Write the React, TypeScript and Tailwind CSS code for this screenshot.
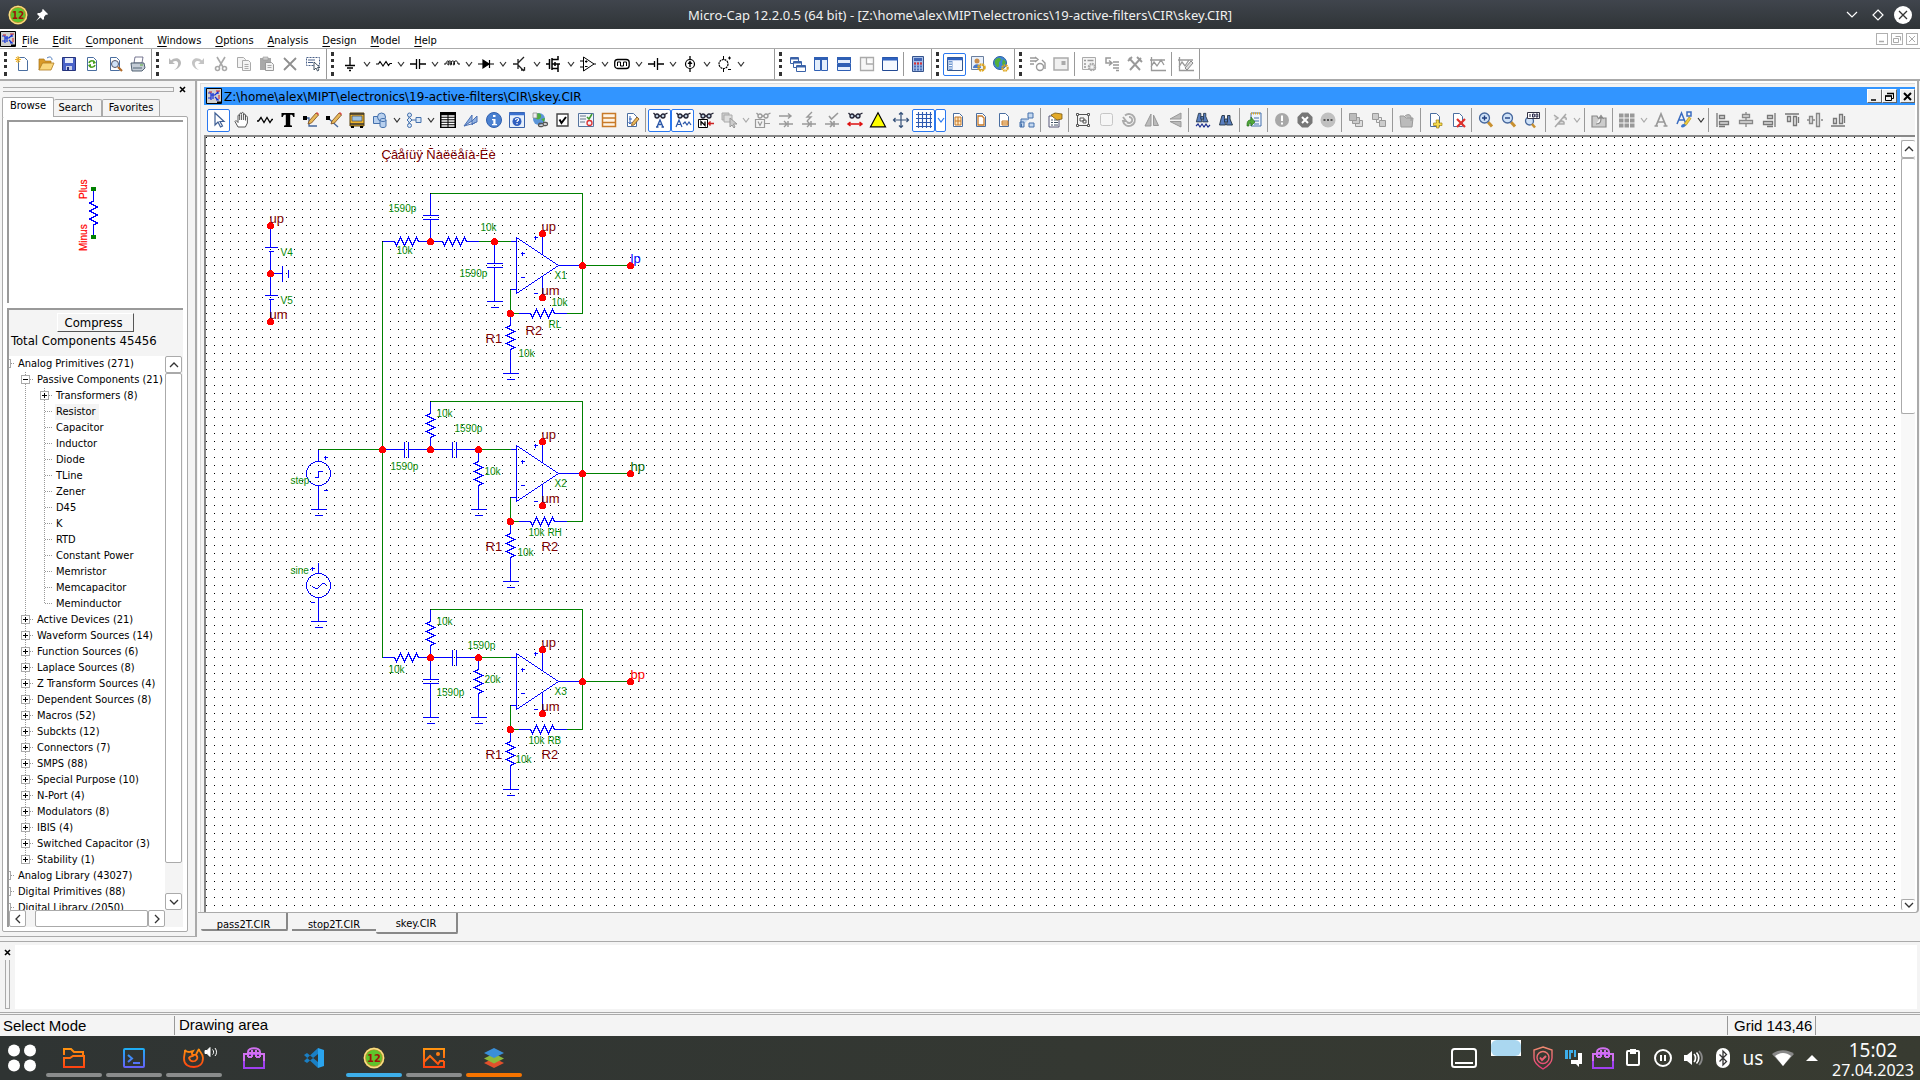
import React from "react";

const ui = "font-['DejaVu_Sans_Condensed','Noto_Sans',sans-serif]";

/* ---------- toolbar icons, all on a 16 x 16 grid ---------- */

const page = <path d="M3.5 1.5h6l3 3v10h-9z" fill="#fff" stroke="#4a6ea0" />;
const glasses = (
  <g fill="none" stroke="#223" strokeWidth="1.3">
    <circle cx="5" cy="4" r="2" fill="#bcd" />
    <circle cx="11" cy="4" r="2" fill="#bcd" />
    <path d="M1.500 1l2 2M12.500 2.500l3-1.500M7 4h2" />
  </g>
);
const glassesGrey = (
  <g fill="none" stroke="#999" strokeWidth="1.3">
    <circle cx="5" cy="4" r="2" />
    <circle cx="11" cy="4" r="2" />
    <path d="M1.500 1l2 2M12.500 2.500l3-1.500M7 4h2" />
  </g>
);
const pencil = (
  <>
    <path d="M6 9l7-8 2.500 2-7 8-3.500 1z" fill="#e8b95a" stroke="#7a4a1a" strokeWidth=".8" />
    <path d="M13 1l2.500 2 .5-1-2-2z" fill="#d44" />
  </>
);
const binoc = (
  <g fill="#5a7fc0" stroke="#234" strokeWidth=".9">
    <path d="M4 1.500h2.500v3L7.500 11H1.500L3 5zM9.500 1.500H12v3.500l2.500 6h-6L9.500 5z" />
    <path d="M6.500 5h3v3h-3z" />
  </g>
);
const lens = (
  <>
    <path d="M10 10l4 4.500" stroke="#c89030" strokeWidth="3" />
    <circle cx="6.500" cy="6" r="5" fill="#cfe2f8" stroke="#46679c" strokeWidth="1.3" />
  </>
);

const icons: Record<string, React.ReactNode> = {
  New: <>{page}<path d="M3 0v7M0 3.500h6M1 1l4 5M5 1L1 6" stroke="#f0b020" /></>,
  Open: <><path d="M1 14V3h5l1 2h6v3H5z" fill="#d99a28" stroke="#a87418" strokeWidth=".7" /><path d="M1 14l3.500-7H16l-3 7z" fill="#f9d77d" stroke="#b07a1c" strokeWidth=".8" /><path d="M9 2c3-2 5-1 5 2" fill="none" stroke="#5580c0" /></>,
  Save: <><path d="M1.500 1.500h13v13h-13z" fill="#4a63c8" stroke="#25337c" /><path d="M4 2h8v5H4z" fill="#e7ecfa" /><path d="M5 10h6v4H5z" fill="#c9cfe8" /><path d="M6 11h2v3H6z" fill="#25337c" /></>,
  Revert: <>{page}<path d="M5 7c1-3 5-3 6 0M11 9c-1 3-5 3-6 0" fill="none" stroke="#48a020" strokeWidth="1.6" /><path d="M9 4l3 3-3 1zM7 12L4 9l3-1z" fill="#48a020" /></>,
  Preview: <>{page}<circle cx="8" cy="8" r="3.500" fill="#cfe2f8" stroke="#556" /><path d="M11 11l4 4" stroke="#b06a28" strokeWidth="2.200" /></>,
  Print: <><path d="M5 1h8l-1 6H4z" fill="#fff" stroke="#557" strokeWidth=".8" /><path d="M1 7h13l1 5-3 3H2z" fill="#c4ccd6" stroke="#456" strokeWidth=".9" /><path d="M3 12h9" stroke="#567" /><path d="M10 9h3" stroke="#58b038" /></>,
  Undo: <path d="M2 2v6h6L5.500 6C9 3.500 12 5.500 11 9c-.5 2-2 4-4 5 4-1 7-4 7-7 0-5-6-6.500-10-2.500z" fill="#b9b9b9" />,
  Redo: <path d="M14 2v6H8l2.500-2C7 3.500 4 5.500 5 9c.5 2 2 4 4 5-4-1-7-4-7-7 0-5 6-6.500 10-2.500z" fill="#c4c4c4" />,
  Cut: <g fill="none" stroke="#a9a9a9" strokeWidth="1.6"><path d="M4 1l6 10M12 1L6 11" /><circle cx="4.500" cy="12.500" r="2" /><circle cx="11.500" cy="12.500" r="2" /></g>,
  Copy: <g fill="#f4f4f4" stroke="#aaa"><path d="M1.500 1.500h6l2 2v8h-8z" /><path d="M6.500 4.500h6l2 2v8h-8z" /><path d="M8.500 8.500h4M8.500 10.500h4M8.500 12.500h4" /></g>,
  Paste: <><path d="M1 2h11v12H1z" fill="#a9a9a9" /><path d="M4 1h5v3H4z" fill="#ccc" stroke="#999" strokeWidth=".6" /><path d="M6.500 6.500h6l2 2v6h-8z" fill="#f2f2f2" stroke="#999" /><path d="M8.500 9.500h4M8.500 11.500h4" stroke="#aaa" /></>,
  Delete: <path d="M2 2l12 12M14 2L2 14" stroke="#8f8f8f" strokeWidth="1.800" />,
  "Select all": <><path d="M1.500 1.500h13v8h-13z" fill="none" stroke="#4a6088" strokeDasharray="2 1" /><path d="M3 4h7M3 6.500h5" stroke="#4a6088" /><path d="M9 6v8l2-2 1.500 3 1.500-1-1.500-2.500H15z" fill="#fff" stroke="#345" strokeWidth=".9" /></>,
  Ground: <path d="M8 1v8M3 9.500h10M5 12h6M7 14.500h2" stroke="#000" strokeWidth="1.300" />,
  Resistor: <path d="M0 8h2.500L4 5.500l3 4.500 3-4.500 2.500 4L14 7.500h2" fill="none" stroke="#000" strokeWidth="1.200" />,
  Capacitor: <path d="M0 8h6.500M9.500 8H16M6.500 3v10M9.500 3v10" stroke="#000" strokeWidth="1.300" fill="none" />,
  Inductor: <path d="M0 8h2c0-4 4-4 3 0-.5 2-1.500 1-1-.5C4 4 8 4 7.500 8c-.5 2-1.500 1-1-.5C7 4 11 4 10.500 8c-.5 2-1.500 1-1-.5C10 4 14 4 14 8h2" fill="none" stroke="#000" />,
  Diode: <path d="M0 8h16M5 4v8l6-4zM11.500 4v8" stroke="#000" strokeWidth="1.200" />,
  Transistor: <path d="M1 8h5M6 3v10M6 7l6-6M6 9l6 6M9 14h3.500v-3" stroke="#222" strokeWidth="1.300" fill="none" />,
  Mosfet: <path d="M0 8h3M3.500 3v10M6 2v12M6 3.500h6V0M6 8h8M12 8v8M6 12.500h6M9 6v4" stroke="#000" strokeWidth="1.500" fill="none" />,
  Opamp: <path d="M3.500 1v14L14 8zM0 5h3M0 11h3M14 8h2M5 5.500h2.500M6.200 4.300v2.500M5 10.500h2.500" stroke="#000" fill="none" />,
  "Digital source": <><rect x=".7" y="3.500" width="14.500" height="9" rx="3" fill="none" stroke="#000" strokeWidth="1.300" /><path d="M3.500 10V6h3v4h3V6h3v4" fill="none" stroke="#000" /></>,
  Battery: <path d="M0 8h6.500M9.500 8H16M6.500 5v6M9.500 2v12" stroke="#000" strokeWidth="1.300" />,
  "Current source": <><circle cx="8" cy="8" r="4.500" fill="none" stroke="#000" strokeWidth="1.200" /><path d="M8 0v3.500M8 12.500V16M8 11V6" stroke="#000" strokeWidth="1.300" /><path d="M5.500 8L8 4.500 10.500 8z" /></>,
  "Voltage source": <><circle cx="7.500" cy="8" r="4.500" fill="none" stroke="#000" strokeWidth="1.200" strokeDasharray="2 .7" /><path d="M7.500 0v3.500M7.500 12.500V16M12 2h3M13.500 .5v3M12 13.500h3" stroke="#000" /></>,
  Cascade: <g fill="#fff" stroke="#3a62a8"><path d="M.5 1.500h8v6h-8z" /><path d="M1 2.500h7" strokeWidth="2" /><path d="M3.500 5.500h8v6h-8z" /><path d="M4 6.500h7" strokeWidth="2" /><path d="M6.500 9.500h9v6h-9z" /><path d="M7 10.500h8" strokeWidth="2" /></g>,
  "Tile vertical": <g fill="#e3eefc" stroke="#2f5fb4"><path d="M1.500 1.500h6v13h-6zM8.500 1.500h6v13h-6z" /><path d="M1 2.500h14" strokeWidth="3" /></g>,
  "Tile horizontal": <g fill="#e3eefc" stroke="#2f5fb4"><path d="M1.500 1.500h13v6h-13zM1.500 8.500h13v6h-13z" /><path d="M1 2.500h14M1 9.500h14" strokeWidth="3" /></g>,
  Overlap: <path d="M1.500 1.500h13v13h-13zM7.500 2v6h7" fill="#f6f6f6" stroke="#aaa" strokeWidth="1.300" />,
  Maximize: <><path d="M.5 1.500h15v13H.5z" fill="#f4f8ff" stroke="#234a94" /><path d="M0 3h16" stroke="#2f62c0" strokeWidth="3" /></>,
  Calculator: <><path d="M2.500.5h11v15h-11z" fill="#a9c0e8" stroke="#35538c" /><path d="M4 2h8v3H4z" fill="#3f64b4" /><path d="M4 7.500h8M4 10.500h8M4 13.500h8" stroke="#4a6fb8" strokeWidth="1.800" strokeDasharray="2 1" /><path d="M4 7.500h8" stroke="#d33" strokeWidth="1.800" strokeDasharray="2 1" /></>,
  Panel: <><path d="M.5 1.500h15v13H.5z" fill="#f4f8ff" stroke="#34568c" /><path d="M0 3h16" stroke="#2f62c0" strokeWidth="2.500" /><path d="M3.500 5v9" stroke="#6f97d0" strokeWidth="4" /><path d="M2 7h3M2 9.500h3M2 12h3" stroke="#fff" /></>,
  Preferences: <><path d="M1.500.5h12v13h-12z" fill="#e9f0fa" stroke="#6a7f9f" /><circle cx="7" cy="5" r="2.500" fill="#c88c4c" /><path d="M3 12c0-5 8-5 8 0z" fill="#4a78c8" /><circle cx="11.500" cy="11.500" r="3" fill="none" stroke="#e0a820" strokeWidth="2.500" strokeDasharray="1.800 .6" /></>,
  "Global settings": <><circle cx="7" cy="7" r="6.500" fill="#3f86d8" stroke="#2a5fa0" /><path d="M2 4c3-3 5-2 6-1S5 6 6 8s-1 4-2 3-3-4-2-7zM10 3l3 3-2 4-2-2z" fill="#54b03c" /><circle cx="12" cy="12" r="2.700" fill="none" stroke="#e0a820" strokeWidth="2.200" strokeDasharray="1.600 .6" /></>,
  Run: <g fill="none" stroke="#999" strokeWidth="1.400"><path d="M0 2h6M0 5h6M0 8h4M5 1l3 2.500L5 6" /><circle cx="10" cy="11" r="3.500" /><path d="M12 4l3 3v6" /></g>,
  Window: <><path d="M1 2h14v12H1z" fill="#f0f0f0" stroke="#aaa" strokeWidth="1.500" /><path d="M8.500 5h4v4h-4z" fill="#aaa" /></>,
  Limits: <><path d="M1.500 1.500h13v12h-13z" fill="#f4f4f4" stroke="#aaa" /><path d="M3 4.500h2M6.500 4.500h6M3 8h2M3 11h2" stroke="#999" strokeWidth="1.500" /><circle cx="11" cy="11" r="3" fill="none" stroke="#aaa" strokeWidth="2.500" strokeDasharray="1.700 .6" /></>,
  Stepping: <path d="M7 2H2v5h5M5 4.500L8 7 5 9.500M9 6h6M9 9h6M9 12h6M12 14.500h3" fill="none" stroke="#999" strokeWidth="1.500" />,
  Tools: <path d="M2 2l11 12M14 2L3 14M1 5l4-4M10 1l5 5" fill="none" stroke="#999" strokeWidth="1.900" />,
  Plot: <path d="M1.500 1v13.500H16M0 4h15M1 11l3-5 3 4 4-6 3 5" fill="none" stroke="#999" strokeWidth="1.300" />,
  "Plot edit": <><path d="M1.500 1v13.500H16M0 4h15M1 11l3-5 3 4 4-6" fill="none" stroke="#999" strokeWidth="1.300" /><path d="M7 12l6-7 2 2-6 7z" fill="#ddd" stroke="#888" /></>,
  Select: <path d="M4 1v12l3-3 2.500 5 2-1L9 9.500h4z" fill="#fff" stroke="#3f5f94" strokeWidth="1.200" />,
  Pan: <path d="M4 15L1 9.500l1-1 2 2V4c0-1.500 1.600-1.500 1.700 0V2.200c0-1.500 1.800-1.500 1.900 0V1.500c0-1.500 1.900-1.400 2 0V3c0-1.300 1.800-1.300 1.900 0v2c0-1.300 1.900-1.300 1.900.2V11l-2 4zM5.700 4v4M7.600 2.500V8M9.600 3v5M11.500 5v3.500" fill="#fff" stroke="#444" strokeWidth=".9" />,
  Component: <path d="M0 9h1.500l2.500-3.500 3 5 3-5 3 5 2-3h1" fill="none" stroke="#000" strokeWidth="1.300" />,
  Text: <path d="M1.500 1h13v4h-1.300c-.4-1.700-1-2.200-2.500-2.200h-.5v9.400c0 1 .4 1.300 1.800 1.300V15H4v-1.500c1.400 0 1.800-.3 1.800-1.300V2.800h-.5C3.800 2.800 3.200 3.300 2.800 5H1.500z" />,
  Wire: <><path d="M1 6h5v8h8" fill="none" stroke="#46679c" strokeWidth="1.300" /><path d="M0 4h4v4H0z" />{pencil}</>,
  "Diagonal wire": <><path d="M2 6l10 9" fill="none" stroke="#46679c" strokeWidth="1.300" /><path d="M0 4h4v4H0z" />{pencil}</>,
  Bus: <><path d="M1 1h14v13H1z" fill="#f0b52c" stroke="#5b430d" /><path d="M3 4h10v5H3z" fill="#9fc3e2" stroke="#555" strokeWidth=".8" /><path d="M1 2h14M1 12h14" stroke="#333" strokeWidth="1.300" /><path d="M2 14h3v2H2zM11 14h3v2h-3z" /></>,
  Graphics: <g fill="#b8d0ee" stroke="#4470ac"><path d="M1.500 4.500h7v7h-7z" /><circle cx="9.500" cy="5" r="4" /><path d="M8 8v6c0 2 6 2 6 0V8c0-2-6-2-6 0z" /><path d="M8 8c0 2 6 2 6 0" fill="none" /></g>,
  Flowchart: <g fill="#d8e6f6" stroke="#4470ac"><path d="M3 4v8M4.500 8H10" /><circle cx="3.500" cy="3" r="2" /><path d="M1 8l2.500-2.500L6 8l-2.500 2.500z" /><circle cx="3.500" cy="13.500" r="2" /><path d="M10 5.500h5v5h-5z" /></g>,
  Table: <><path d="M0 0h16v16H0z" /><path d="M1.500 4h6M8.500 4h6M1.500 6.500h6M8.500 6.500h6M1.500 9h6M8.500 9h6M1.500 11.500h6M8.500 11.500h6M1.500 14h6M8.500 14h6" stroke="#fff" strokeWidth="1.500" /></>,
  Mirror: <path d="M1 14l8-11v6l5-5v6l-3 1-2 2V9zM1 14l11-3" fill="#8fb0e0" stroke="#4a70b4" />,
  Info: <><circle cx="8" cy="8" r="7.500" fill="#4a80d0" stroke="#2f5fae" /><path d="M7 3h2.500v2H7zM6 7h3.500v5H11v1.200H6V12h1.300V8.200H6z" fill="#fff" /></>,
  "Help mode": <><path d="M.5.500h15v15H.5z" fill="#e6effb" stroke="#3a62a8" /><path d="M0 2h16" stroke="#3a70d0" strokeWidth="2.500" /><circle cx="8" cy="9.500" r="4.500" fill="#2f5fc0" /><path d="M6.500 8c0-2 3.500-2 3 0-.2.800-1.500 1-1.500 2M8 11v1.200" fill="none" stroke="#fff" strokeWidth="1.200" /></>,
  Link: <><circle cx="7" cy="7" r="6" fill="#5b95d8" /><path d="M3 2c4-2 7 0 6 3s-4 3-6 1zM9 7l4-1-1 4z" fill="#4fae3c" /><path d="M1 1h4v5H1z" fill="#eee" stroke="#888" strokeWidth=".7" /><path d="M7 11.500h3c2 0 2 3 0 3H8c-2 0-2-3 0-3M11 10.500h3c2 0 2 3 0 3h-2" fill="none" stroke="#555" strokeWidth="1.300" /></>,
  Enable: <><path d="M2 2h11v12H2z" fill="#fff" stroke="#444" strokeWidth="1.400" /><path d="M4.500 7.500l2 3.500 4.500-6" fill="none" stroke="#000" strokeWidth="2" /></>,
  "Enable region": <><path d="M.5 1.500h15v13H.5z" fill="#f2f5fa" stroke="#56749e" /><path d="M2 4h6M2 7h6M2 10h5" stroke="#678" /><path d="M9 5l2 2 3-5" fill="none" stroke="#3a9a2c" strokeWidth="1.500" /><circle cx="11.500" cy="11" r="2.500" fill="none" stroke="#d33" strokeWidth="1.300" /></>,
  Region: <path d="M1.500 1.500h13v13h-13zM1 6h14M1 10.500h14" fill="#fff4e4" stroke="#c87a28" strokeWidth="1.500" />,
  "Edit text": <>{page}<path d="M5 7h3M6 4v8M4.500 10L6 12l1.500-2" fill="none" stroke="#3464b8" /><path d="M8 11l5-6 2 2-5 6-2.500.5z" fill="#e8b95a" stroke="#7a4a1a" strokeWidth=".8" /></>,
  "Attribute text": <>{glasses}<path d="M5 15L8 8l3 7M6 12.500h4M4 15h2.500M9.500 15H12" fill="none" stroke="#2a56a8" strokeWidth="1.300" /></>,
  "Grid text": <>{glasses}<path d="M1 15l3-7 3 7M2 12.500h4M8 12l2-2 2 3 2-3 2 3" fill="none" stroke="#2a56a8" strokeWidth="1.200" /></>,
  "Node numbers": <>{glasses}<path d="M.5 7.500h9v8h-9z" fill="#fff" stroke="#000" /><path d="M3 13.500v-4l4 4v-4" fill="none" stroke="#000" strokeWidth="1.300" /><path d="M10 11.500h6M12.500 9.500l-2 2 2 2" fill="none" stroke="#c22" strokeWidth="1.400" /></>,
  "Copy node": <><path d="M1 1h7v7H1z" fill="#ccc" stroke="#aaa" /><path d="M3 3h8v7H3z" fill="#ddd" stroke="#aaa" /><path d="M9 6v9l2-2 2 3 1-1-1.500-3H16z" fill="#ccc" stroke="#999" /></>,
  "Node voltages": <>{glassesGrey}<path d="M.5 7.500h9v8h-9zM3 9.500l2 4 2-4M10 11.500h5" fill="none" stroke="#999" strokeWidth="1.200" /></>,
  Currents: <path d="M1 4h12M10 1.500L13 4l-3 2.500M1 12h14M6 9l3 3-3 3M10 9v6" fill="none" stroke="#999" strokeWidth="1.400" />,
  Power: <path d="M1 12h14M6 9l3 3-3 3M10 9v6M11 0L6 5h4L6 9" fill="none" stroke="#999" strokeWidth="1.400" />,
  Condition: <path d="M1 12h14M6 9l3 3-3 3M10 9v6M5 4l2.500 3L14 1" fill="none" stroke="#999" strokeWidth="1.600" />,
  "Pin connections": <>{glasses}<path d="M1 12h14M3.500 10L1 12l2.500 2M12.500 10l2.500 2-2.500 2" fill="none" stroke="#d11" strokeWidth="1.500" /></>,
  Warning: <path d="M8 .8l7.500 14H.5z" fill="#ff0" stroke="#000" strokeWidth="1.200" />,
  Crosshair: <path d="M8 .5v15M.5 8h15M6 2.500L8 .5l2 2M6 13.500l2 2 2-2M2.500 6l-2 2 2 2M13.500 6l2 2-2 2" fill="none" stroke="#345078" strokeWidth="1.200" />,
  Grid: <path d="M2.500 0v16M6.500 0v16M10.500 0v16M14.500 0v16M0 2.500h16M0 6.500h16M0 10.500h16M0 14.500h16" stroke="#2f5ab0" strokeWidth="1.100" />,
  "Page grid": <>{page}<path d="M5 5h6v8H5zM5 9h6M8 5v8" fill="#ffe8c0" stroke="#c87a28" /></>,
  Border: <>{page}<path d="M5 4h4l2 2v7H5z" fill="#fff" stroke="#c87a28" strokeWidth="1.300" /></>,
  Title: <>{page}<path d="M6 9h6v4H6zM6 11h6" fill="#ffe8c0" stroke="#c87a28" /></>,
  Rubberband: <path d="M2 15V7h8M2.500 12v3M9 1h5v5H9zM1 10h4v5H1zM10 11h5v4h-5z" fill="#c4d8f0" stroke="#4470ac" />,
  Properties: <><path d="M2 4h10v11H2z" fill="#fff" stroke="#557" /><path d="M4 8h2M7 8h4M4 10.500h2M7 10.500h4M4 13h2M7 13h4" stroke="#456" /><path d="M4 3l4-2 7 1v5l-5 1-4-3z" fill="#e3aa28" stroke="#7a5a14" strokeWidth=".8" /></>,
  Group: <g fill="none" stroke="#555"><path d="M2.500 2.500h11v11h-11z" /><path d="M1.500 1.500h2v2h-2zM12.500 1.500h2v2h-2zM1.500 12.500h2v2h-2zM12.500 12.500h2v2h-2zM5 6h4v3H5zM8 8h3v3H8z" fill="#fff" /></g>,
  Flip: <rect x="2.500" y="1.500" width="12" height="12" rx="2" fill="#f6f6f6" stroke="#c6c6c6" />,
  Rotate: <path d="M4 3.500A6 6 0 1 1 2 9h3l-3-4M8 5a3 3 0 1 1-2 5" fill="none" stroke="#aaa" strokeWidth="1.900" />,
  "Flip X": <path d="M7 2v12H1zM9.500 3v10.500h5z" fill="#bbb" stroke="#999" />,
  "Flip Y": <path d="M14 1v6H3zM14 15V9.500H3z" fill="#bbb" stroke="#999" />,
  "Find component": <><g transform="scale(.9)">{binoc}</g><path d="M1 14l2-2 2 3 2-3 2 3 2-3 2 3 2-2" fill="none" stroke="#1c2f90" strokeWidth="1.200" /></>,
  Find: <g transform="translate(0 2)">{binoc}</g>,
  Refresh: <><path d="M5 1h10v13H5z" fill="#eef4fd" stroke="#4470ac" /><path d="M5 1.500h10" stroke="#e0a820" strokeWidth="2" strokeDasharray="1 1" /><path d="M8 6h5M8 9h5M8 12h5" stroke="#4470ac" /><path d="M1 14c0-5 1-6 4-6V5l4 5-4 4v-3c-2 0-2 1-2 3z" fill="#4fa83a" stroke="#2a701c" strokeWidth=".7" /></>,
  Alert: <><circle cx="8" cy="8" r="7" fill="#a8a8a8" /><path d="M8 3.500v5.500M8 10.500v2" stroke="#fff" strokeWidth="2" /></>,
  Stop: <><path d="M5 .5h6L15.500 5v6L11 15.500H5L.5 11V5z" fill="#777" /><path d="M5 5l6 6M11 5l-6 6" stroke="#fff" strokeWidth="2" /></>,
  More: <><circle cx="8" cy="8" r="7.500" fill="#c0c0c0" /><path d="M3.500 8h9" stroke="#555" strokeWidth="2" strokeDasharray="2 1.500" /></>,
  Front: <g fill="#ddd" stroke="#999"><path d="M7.500 8.500h7v6h-7z" /><path d="M4.500 5.500h7v6h-7z" fill="#ccc" /><path d="M1.500 1.500h7v7h-7z" fill="#bbb" /></g>,
  Back: <g fill="#ccc" stroke="#999"><path d="M5.500 5.500h5v5h-5z" fill="#eee" /><path d="M1.500 1.500h6v6h-6zM8.500 8.500h6v6h-6z" /></g>,
  Package: <path d="M1 4h4L7 6h7l-1 9H2zM6 4c4-3 7-1 6 5" fill="#bbb" stroke="#999" />,
  "Add page": <>{page}<path d="M9 8h3v3h3v2.500h-3V16H9.500v-2.500h-3V11h3z" fill="#f5dc50" stroke="#a08010" strokeWidth=".7" /></>,
  "Delete page": <>{page}<path d="M7 7l8 8M15 7l-8 8" stroke="#e0302a" strokeWidth="2.200" /></>,
  "Zoom in": <>{lens}<path d="M4 6h5M6.500 3.500v5" stroke="#1f3f80" strokeWidth="1.400" /></>,
  "Zoom out": <>{lens}<path d="M4 6h5" stroke="#1f3f80" strokeWidth="1.400" /></>,
  "Zoom 100": <><circle cx="5.500" cy="9" r="4" fill="#cfe2f8" stroke="#46679c" strokeWidth="1.300" /><path d="M8 12l3 3.500" stroke="#c89030" strokeWidth="2.500" /><path d="M3.500.5h12v6h-12z" fill="#fff" stroke="#334" /><path d="M6 2v3M8.500 2h1.800v3H8.500zM12 2h1.800v3H12z" fill="none" stroke="#224" /></>,
  Probe: <path d="M2 3l4 3-3 2M3 15L14 2M7 12c0-4 6-4 5 0zM11 6c2-2 4 0 3 2" fill="#ddd" stroke="#aaa" strokeWidth="1.500" />,
  "Path up": <path d="M1 4h5l1 2h8v9H1zM5 12c5 0 5-3 5-7M7.500 7L10 3.500 12.500 7" fill="#ccc" stroke="#888" strokeWidth="1.200" />,
  Color: <path d="M0 3.500h16M0 8.500h16M0 13.500h16" stroke="#999" strokeWidth="4" strokeDasharray="4.500 1" />,
  Font: <path d="M3 14L8 2l5 12M5 10h6M1.500 14H5M10.500 14h4" fill="none" stroke="#999" strokeWidth="1.700" />,
  Format: <><path d="M1 12L5.500 1 10 12M3 8h5.500M11 0h4v4h-4z" fill="none" stroke="#3a6cc0" strokeWidth="1.500" /><path d="M8 12l5-7 2 1.500-5 7z" fill="#f0d040" stroke="#a88010" strokeWidth=".6" /><path d="M5 15c0-3 3-4 5-2-1 2-3 3-5 2z" fill="#3a78d0" /></>,
  "Align left": <path d="M2 1v14M4.500 3.500h5v3h-5zM4.500 9.500h9v3h-9zM4 14.500h6" fill="#ddd" stroke="#777" strokeWidth="1.300" />,
  "Align middle": <path d="M8 0v2M8 6v2M8 12v3M4.500 2.500h7v3h-7zM1.500 8.500h13v3h-13z" fill="#ddd" stroke="#888" strokeWidth="1.300" />,
  "Align right": <path d="M14 1v14M6.500 3.500h5v3h-5zM2.500 9.500h9v3h-9zM6 14.500h6" fill="#ddd" stroke="#777" strokeWidth="1.300" />,
  "Align top": <path d="M1 2h14M3.500 4.500h3v5h-3zM9.500 4.500h3v9h-3zM14.500 5v6" fill="#ddd" stroke="#777" strokeWidth="1.300" />,
  "Align center": <path d="M0 8h2M6 8h2M14 8h2M2.500 4.500h3v7h-3zM9.500 1.500h3v13h-3z" fill="#ddd" stroke="#888" strokeWidth="1.300" />,
  "Align bottom": <path d="M1 14h14M3.500 6.500h3v5h-3zM9.500 2.500h3v9h-3zM14.500 4v7" fill="#ddd" stroke="#777" strokeWidth="1.300" />,
};

function Icon({ name }: { name: string }) {
  return (
    <svg viewBox="0 0 16 16" className="size-4 overflow-visible">
      {icons[name]}
    </svg>
  );
}

function Chevron({ color = "#333" }: { color?: string }) {
  return (
    <svg viewBox="0 0 8 8" className="size-2 shrink-0">
      <path d="M1 2l3 4 3-4" fill="none" stroke={color} strokeWidth="1.200" />
    </svg>
  );
}

/* Entries: an icon name, with "*" when pressed; ">" a drop arrow, ">-" a disabled one, ">*" a pressed one; "|" a divider. */
function Tools({ items }: { items: string[] }) {
  return (
    <>
      {items.map((item, i) => {
        if (item === "|") return <span key={i} className="mx-[2px] h-6 w-px shrink-0 bg-[#999]" />;
        if (item[0] === ">")
          return (
            <button
              key={i}
              aria-label="More choices"
              className={
                "flex h-[23px] w-[11px] shrink-0 items-center justify-center" +
                (item === ">*" ? " rounded-xs border border-[#2a78f0] bg-white" : "")
              }
            >
              <Chevron color={item === ">-" ? "#aaa" : item === ">*" ? "#2a78f0" : "#333"} />
            </button>
          );
        const pressed = item.endsWith("*");
        const name = item.replace("*", "");
        return (
          <button
            key={i}
            aria-label={name}
            className={
              "flex h-[23px] w-[23px] shrink-0 items-center justify-center" +
              (pressed ? " rounded-xs border border-[#2a78f0] bg-white" : "")
            }
          >
            <Icon name={name} />
          </button>
        );
      })}
    </>
  );
}

const mainGroups: { items: string[]; wide?: boolean }[] = [
  { items: ["New", "Open", "Save", "Revert", "Preview", "Print"] },
  { items: ["Undo", "Redo", "Cut", "Copy", "Paste", "Delete", "Select all"] },
  {
    wide: true,
    items: ["Ground", "Resistor", "Capacitor", "Inductor", "Diode", "Transistor", "Mosfet", "Opamp", "Digital source", "Battery", "Current source", "Voltage source"].flatMap((n) => [n, ">"]),
  },
  { items: ["Cascade", "Tile vertical", "Tile horizontal", "Overlap", "Maximize", "|", "Calculator"] },
  { items: ["Panel*", "Preferences", "Global settings"] },
  { items: ["Run", "Window", "|", "Limits", "Stepping", "Tools", "Plot", "|", "Plot edit"] },
];

const docTools = [
  "Select*", "Pan", "Component", "Text", "Wire", "Diagonal wire", "Bus", "Graphics", ">", "Flowchart", ">", "Table", "Mirror", "Info", "Help mode", "Link", "Enable", "Enable region", "Region", "Edit text", "|",
  "Attribute text*", "Grid text*", "Node numbers", "Copy node", ">-", "Node voltages", "Currents", "Power", "Condition", "Pin connections", "Warning", "Crosshair", "Grid*", ">*", "Page grid", "Border", "Title", "Rubberband", "|",
  "Properties", "|", "Group", "Flip", "Rotate", "Flip X", "Flip Y", "|", "Find component", "Find", "|", "Refresh", "|", "Alert", "Stop", "More", "|", "Front", "Back", "|", "Package", "|", "Add page", "Delete page", "|",
  "Zoom in", "Zoom out", "Zoom 100", "|", "Probe", ">-", "|", "Path up", "|", "Color", ">-", "Font", "Format", ">", "|", "Align left", "Align middle", "Align right", "Align top", "Align center", "Align bottom",
];

/* ---------- logos ---------- */

function AppLogo({ className }: { className: string }) {
  return (
    <svg viewBox="0 0 20 20" className={className}>
      <circle cx="10" cy="10" r="9.500" fill="#c8902a" />
      <circle cx="10" cy="10" r="8.700" fill="none" stroke="#f4e08a" strokeWidth="1.300" />
      <circle cx="10" cy="10" r="7.300" fill="#5fc42c" />
      <text x="10" y="14" textAnchor="middle" fontSize="10" fontWeight="700" fill="#a01408" fontFamily="DejaVu Sans Condensed, DejaVu Sans, sans-serif">12</text>
    </svg>
  );
}

function DocLogo() {
  return (
    <svg viewBox="0 0 16 16" className="size-4 shrink-0">
      <path d="M.5.500h15v15H.5z" fill="#d0d0d0" stroke="#000" />
      <path d="M2 5h3v7M2 10h3M7 5v6M5 7h4l3-3M9 9l3 3M12 3v3M10 12h3" fill="none" stroke="#1030d8" strokeWidth="1.200" />
      <path d="M3 4h3M10 3h4M12 8h2M13 9v2" stroke="#d02020" />
      <path d="M11 14.500h4" stroke="#000" strokeWidth="2" />
    </svg>
  );
}

/* ---------- schematic ---------- */

const zigH = (x: number, y: number) => `M${x - 12} ${y}h12l2 4 4-8 4 8 4-8 4 8 4-8 2 4h12`;
const zigV = (x: number, y: number) => `M${x} ${y - 12}v12l-4 2 8 4-8 4 8 4-8 4 8 4-4 2v12`;
const capH = (x: number, y: number) => `M${x - 22} ${y}h22M${x} ${y - 8}v16M${x + 4} ${y - 8}v16M${x + 4} ${y}h22`;
const capV = (x: number, y: number) => `M${x} ${y - 22}v22M${x - 8} ${y}h16M${x - 8} ${y + 4}h16M${x} ${y + 4}v22`;
const gnd = (x: number, y: number) => `M${x - 8} ${y}h16M${x - 4} ${y + 6}h8`;
const plus = (x: number, y: number) => `M${x - 2} ${y}h4M${x} ${y - 2}v4`;
const minus = (x: number, y: number) => `M${x - 2} ${y}h4`;

function Dot({ x, y }: { x: number; y: number }) {
  return <circle cx={x} cy={y} r="3.500" fill="#f00" />;
}
function Val({ x, y, children }: { x: number; y: number; children: string }) {
  return <text x={x} y={y - 1} fontSize="10" fill="#088a08">{children}</text>;
}
function Big({ x, y, fill = "#800000", children }: { x: number; y: number; fill?: string; children: string }) {
  return <text x={x - 1} y={y - 1} fontSize="13" fill={fill}>{children}</text>;
}

/* Amplifier with its feedback divider; y is the row of its upper input. */
function Stage({ y, name, out, color }: { y: number; name: string; out: string; color: string }) {
  return (
    <>
      <path
        d={`M430 ${y - 48}H582V${y + 72}H566M582 ${y + 24}H630M510 ${y + 48}V${y + 72}H518`}
        stroke="#008000"
      />
      <path
        d={`M510 ${y}h6M516 ${y - 4}v56l42 -28zM558 ${y + 24}h24M510 ${y + 48}h6M542 ${y - 8}v21M542 ${y + 35}v21${plus(522, y + 12)}${minus(522, y + 36)}${plus(535, y - 4)}${minus(535, y + 52)}${zigH(530, y + 72)}${zigV(510, y + 84)}M510 ${y + 108}v24${gnd(510, y + 132)}`}
        stroke="#00f"
      />
      <Dot x={582} y={y + 24} />
      <Dot x={630} y={y + 24} />
      <Dot x={542} y={y - 8} />
      <Dot x={542} y={y + 56} />
      <Dot x={510} y={y + 72} />
      <Dot x={430} y={y} />
      <g stroke="none">
        <Big x={542} y={y - 10}>up</Big>
        <Big x={542} y={y + 54}>um</Big>
        <Big x={631} y={y + 22} fill={color}>{out}</Big>
        <Val x={554} y={y + 38}>{name}</Val>
      </g>
    </>
  );
}

function Schematic() {
  return (
    <svg className="block h-full min-w-0 flex-1" fontFamily="'Liberation Sans', sans-serif" role="img" aria-label="Schematic">
      <defs>
        <pattern id="dots" width="8" height="8" patternUnits="userSpaceOnUse">
          <rect width="1" height="1" fill="#000" />
        </pattern>
      </defs>
      <rect width="100%" height="100%" fill="url(#dots)" />
      <g transform="translate(-205.500 -136.500)" fill="none" shapeRendering="crispEdges">
        <path d="M382 241V657M478 241h32M318 449h64M478 449h32M478 657h32" stroke="#008000" />
        <g stroke="#00f">
          <path d={`M270 225v22M264 247h13M268 251h5M270 251v44M264 295h13M268 299h5M270 299v22M270 273h12M282 265v16M288 269v8`} />
          <path d={zigH(394, 241) + zigH(442, 241) + capV(430, 215) + capV(494, 263) + "M494 289v12" + gnd(494, 301)} />
          <path d={zigV(430, 413) + capH(404, 449) + capH(452, 449) + zigV(478, 461) + "M478 497v12" + gnd(478, 509)} />
          <path d={zigV(430, 621) + zigH(394, 657) + capH(452, 657) + capV(430, 679) + "M430 705v12" + gnd(430, 717) + zigV(478, 669) + "M478 705v12" + gnd(478, 717)} />
          <path d={"M318 449v12M318 485v24" + gnd(318, 509) + plus(325, 457) + minus(325, 490) + "M314 477h4v-6h4"} />
          <path d={"M318 562v11M318 597v24" + gnd(318, 621) + plus(312, 568) + minus(312, 602) + "M312 586l3 2h2l5-5h2l2 2"} />
          <circle cx="318" cy="473" r="12" />
          <circle cx="318" cy="585" r="12" />
        </g>
        <Stage y={241} name="X1" out="lp" color="#0000ff" />
        <Stage y={449} name="X2" out="hp" color="#006400" />
        <Stage y={657} name="X3" out="bp" color="#ff0000" />
        <Dot x={270} y={225} />
        <Dot x={270} y={273} />
        <Dot x={270} y={321} />
        <Dot x={494} y={241} />
        <Dot x={382} y={449} />
        <Dot x={478} y={449} />
        <Dot x={478} y={657} />
        <Big x={382} y={159}>Çâåíüÿ Ñàëëåíà-Ëè</Big>
        <Big x={270} y={223}>up</Big>
        <Big x={270} y={319}>um</Big>
        <Val x={280} y={256}>V4</Val>
        <Val x={280} y={304}>V5</Val>
        <Val x={388} y={212}>1590p</Val>
        <Val x={480} y={231}>10k</Val>
        <Val x={396} y={254}>10k</Val>
        <Val x={459} y={277}>1590p</Val>
        <Val x={551} y={306}>10k</Val>
        <Val x={548} y={328}>RL</Val>
        <Val x={518} y={357}>10k</Val>
        <Big x={486} y={343}>R1</Big>
        <Big x={526} y={335}>R2</Big>
        <Val x={436} y={417}>10k</Val>
        <Val x={454} y={432}>1590p</Val>
        <Val x={390} y={470}>1590p</Val>
        <Val x={484} y={475}>10k</Val>
        <Val x={528} y={536}>10k RH</Val>
        <Val x={517} y={556}>10k</Val>
        <Big x={486} y={551}>R1</Big>
        <Big x={542} y={551}>R2</Big>
        <Val x={290} y={484}>step</Val>
        <Val x={290} y={574}>sine</Val>
        <Val x={436} y={625}>10k</Val>
        <Val x={467} y={649}>1590p</Val>
        <Val x={388} y={673}>10k</Val>
        <Val x={436} y={696}>1590p</Val>
        <Val x={484} y={683}>20k</Val>
        <Val x={528} y={744}>10k RB</Val>
        <Val x={515} y={763}>10k</Val>
        <Big x={486} y={759}>R1</Big>
        <Big x={542} y={759}>R2</Big>
      </g>
    </svg>
  );
}

/* ---------- component browser ---------- */

type Row = { level: number; text: string; box?: "+" | "-"; last?: boolean; current?: boolean };
const leaves = ["Resistor", "Capacitor", "Inductor", "Diode", "TLine", "Zener", "D45", "K", "RTD", "Constant Power", "Memristor", "Memcapacitor", "Meminductor"];
const branches = ["Active Devices (21)", "Waveform Sources (14)", "Function Sources (6)", "Laplace Sources (8)", "Z Transform Sources (4)", "Dependent Sources (8)", "Macros (52)", "Subckts (12)", "Connectors (7)", "SMPS (88)", "Special Purpose (10)", "N-Port (4)", "Modulators (8)", "IBIS (4)", "Switched Capacitor (3)", "Stability (1)"];
const rows: Row[] = [
  { level: 0, text: "Analog Primitives (271)", box: "-" },
  { level: 1, text: "Passive Components (21)", box: "-" },
  { level: 2, text: "Transformers (8)", box: "+" },
  ...leaves.map((text, i) => ({ level: 2, text, last: i === leaves.length - 1, current: i === 0 })),
  ...branches.map((text, i) => ({ level: 1, text, box: "+" as const, last: i === branches.length - 1 })),
  { level: 0, text: "Analog Library (43027)", box: "+" },
  { level: 0, text: "Digital Primitives (88)", box: "+" },
  { level: 0, text: "Digital Library (2050)", box: "+" },
];

function Cell({ line, box, last, tick }: { line: boolean; box?: "+" | "-"; last?: boolean; tick?: boolean }) {
  return (
    <svg viewBox="0 0 19 16" className="h-4 w-[19px] shrink-0" shapeRendering="crispEdges">
      <g stroke="#999" strokeDasharray="1 1">
        {line && <path d={last ? "M7.500 0v8" : "M7.500 0v16"} />}
        {tick && <path d="M8 7.500h8" />}
      </g>
      {box && (
        <>
          <path d="M3.500 3.500h8v8h-8z" fill="#fff" stroke="#aaa" />
          <path d={box === "+" ? "M5 7.500h5M7.500 5v5" : "M5 7.500h5"} stroke="#000" />
        </>
      )}
    </svg>
  );
}

function TreeRow({ row }: { row: Row }) {
  return (
    <li className="flex h-4 items-center whitespace-nowrap">
      <span className="-ml-[10px] flex">
        <Cell line={false} box={row.level === 0 ? row.box : undefined} tick={row.level === 0} />
        {row.level > 0 && <Cell line box={row.level === 1 ? row.box : undefined} last={row.level === 1 && row.last} tick={row.level === 1} />}
        {row.level > 1 && <Cell line box={row.box} last={row.last} tick />}
      </span>
      <span className={row.current ? "-ml-px bg-[#f4f4f4] pr-[3px] pl-px" : ""}>{row.text}</span>
    </li>
  );
}

const scrollPiece = "flex shrink-0 items-center justify-center rounded-xs border border-[#aaa] bg-white";

function Arrow({ turn }: { turn: string }) {
  return (
    <svg viewBox="0 0 10 10" className={"size-[10px] " + turn}>
      <path d="M1 7l4-4 4 4" fill="none" stroke="#333" strokeWidth="1.300" />
    </svg>
  );
}

function Browser() {
  return (
    <aside className={ui + " flex w-[197px] shrink-0 flex-col border-r-2 border-b border-[#aaa] bg-[#f4f4f4] pr-[7px] pb-1 pl-[2px] text-[11px]"}>
      <div className="flex h-[16px] shrink-0 items-center justify-between pl-px">
        <span className="h-[5px] w-[171px] border-y border-r border-[#aaa]" />
        <button aria-label="Close browser" className="flex size-3 items-center justify-center">
          <svg viewBox="0 0 7 7" className="size-[7px]"><path d="M1 1l5 5M6 1L1 6" stroke="#000" strokeWidth="1.600" /></svg>
        </button>
      </div>
      <div className="flex h-[19px] shrink-0 items-end">
        <button className="z-10 -mb-px h-5 w-[52px] rounded-t-xs border border-b-0 border-[#aaa] bg-white pb-[2px]">Browse</button>
        <button className="h-[17px] w-[48px] rounded-t-xs border border-b-0 border-l-0 border-[#aaa] pr-1">Search</button>
        <button className="h-[17px] w-[58px] rounded-t-xs border border-b-0 border-[#aaa]">Favorites</button>
      </div>
      <div className="flex min-h-0 flex-1 flex-col gap-[5px] rounded-xs border border-[#aaa] bg-white p-1 pt-[3px]">
        <div className="flex h-[183px] shrink-0 items-start justify-center border-t-2 border-l-2 border-[#999] bg-white pt-[49px] pr-[14px]">
          <svg viewBox="0 0 40 90" className="h-[90px] w-10" shapeRendering="crispEdges">
            <path d="M24.500 18v12l-4 2 8 4-8 4 8 4-8 4 8 4-4 2v12" fill="none" stroke="#00f" />
            <circle cx="24.500" cy="18" r="2.500" fill="#008000" />
            <circle cx="24.500" cy="66" r="2.500" fill="#008000" />
            <g fontSize="10" fill="#f00" stroke="#f00" strokeWidth=".2" fontFamily="'Liberation Sans', sans-serif">
              <text transform="translate(18 28) rotate(-90)">Plus</text>
              <text transform="translate(18 80) rotate(-90)">Minus</text>
            </g>
          </svg>
        </div>
        <div className="flex min-h-0 flex-1 flex-col border-t-2 border-l-2 border-[#999] bg-[#f4f4f4]">
          <div className="flex h-[46px] shrink-0 flex-col pt-[3px] text-[13px] leading-[18px]">
            <button className="ml-12 h-[19px] w-[77px] border border-t-white border-r-[#555] border-b-[#555] border-l-white pr-1 leading-[17px]">Compress</button>
            <span className="pl-[2px]">Total Components 45456</span>
          </div>
          <div className="flex min-h-0 flex-1">
            <ul className="min-w-0 flex-1 overflow-hidden bg-white">
              {rows.map((r) => <TreeRow key={r.text} row={r} />)}
            </ul>
            <div className="mr-px flex w-[17px] flex-col">
              <button aria-label="Scroll up" className={scrollPiece + " h-[17px]"}><Arrow turn="" /></button>
              <span className={scrollPiece + " mb-[30px] min-h-0 flex-1"} />
              <button aria-label="Scroll down" className={scrollPiece + " h-[17px]"}><Arrow turn="rotate-180" /></button>
            </div>
          </div>
          <div className="flex h-[17px] shrink-0 pr-[18px]">
            <button aria-label="Scroll left" className={scrollPiece + " w-[17px]"}><Arrow turn="-rotate-90" /></button>
            <span className={scrollPiece + " ml-[9px] min-w-0 flex-1"} />
            <button aria-label="Scroll right" className={scrollPiece + " w-[17px]"}><Arrow turn="rotate-90" /></button>
          </div>
        </div>
      </div>
    </aside>
  );
}

/* ---------- taskbar ---------- */

const bag = (
  <g fill="none" strokeWidth="2">
    <path d="M1 7h20v14H1z" stroke="#a040f0" />
    <path d="M1 14V7h4M17 7h4v7M5 10V5c0-5 12-5 12 0v5M9 10V3M13 10V3M5 6h12M5 10h4M13 10h4" stroke="#d070f0" />
  </g>
);

const apps: { name: string; bar: string; art: React.ReactNode }[] = [
  { name: "Files", bar: "bg-[#8a8c8c]", art: <g fill="none" stroke="url(#fire)" strokeWidth="2"><path d="M1 8V2h7l3 3h9v3" /><path d="M1 20V11h6l3-2h11v11z" /></g> },
  { name: "Terminal", bar: "bg-[#8a8c8c]", art: <><rect x="1" y="2" width="20" height="18" rx="1" fill="none" stroke="url(#sea)" strokeWidth="2" /><path d="M5 8l4 3.500L5 15M10 16h7" fill="none" stroke="url(#sea)" strokeWidth="2" /></> },
  { name: "Firefox", bar: "bg-[#8a8c8c]", art: <><path d="M2 3c1 2 2 2 4 2l4-1c-2 3-1 4 1 4-2 2-4 1-5 3 1 3 3 4 6 3 3-2 3-4 1-6 1-3 2-4 3-6 0 3 4 4 4 9 0 6-4 9-9 9S1 18 1 12c0-4 1-5 1-9z" fill="none" stroke="url(#fire)" strokeWidth="1.800" /><path d="M22 3.500h2l3-3v9l-3-3h-2z" fill="#fff" stroke="#fff" /><path d="M29.500 2.500c1.500 1.500 1.500 4 0 5M32 1c2 2.500 2 6 0 8" fill="none" stroke="#fff" /></> },
  { name: "Store", bar: "", art: bag },
  { name: "Code", bar: "", art: <><path d="M15 1l6 2v16l-6 2z" fill="#2aa4ee" /><path d="M15 1v6L4 16l-3-2zM15 21v-6L4 6 1 8z" fill="#1a7fc4" /></> },
  { name: "Micro-Cap", bar: "bg-[#3daee9]", art: null },
  { name: "Images", bar: "bg-[#8a8c8c]", art: <g fill="none" stroke="url(#fire)" strokeWidth="2"><path d="M21 14v6H1V2h20v9" /><path d="M1 15l6-6 8 8 2-3h4" /><circle cx="15" cy="7" r="1" /></g> },
  { name: "Layers", bar: "bg-[#f67400]", art: <><path d="M11 11l10 5-10 5-10-5z" fill="#e0502c" /><path d="M11 6.500l10 5-10 5-10-5z" fill="#8cb83c" /><path d="M11 1l10 5-10 5-10-5z" fill="#3a8ed8" /></> },
];

function Taskbar() {
  const tray = "size-[22px] shrink-0 overflow-visible";
  return (
    <footer className="flex h-11 shrink-0 items-stretch bg-linear-to-r from-[#2f3433] to-[#383b31] font-['Noto_Sans',sans-serif] text-[#fcfcfc]">
      <svg className="size-0">
        <defs>
          <linearGradient id="fire" x1="0" y1="0" x2="0" y2="22" gradientUnits="userSpaceOnUse"><stop stopColor="#ff9a10" /><stop offset="1" stopColor="#ff3c10" /></linearGradient>
          <linearGradient id="sea" x1="0" y1="0" x2="0" y2="22" gradientUnits="userSpaceOnUse"><stop stopColor="#18b4f4" /><stop offset="1" stopColor="#6a5cf8" /></linearGradient>
          <linearGradient id="rose" x1="0" y1="0" x2="0" y2="22" gradientUnits="userSpaceOnUse"><stop stopColor="#f08a70" /><stop offset="1" stopColor="#e83c78" /></linearGradient>
        </defs>
      </svg>
      <button aria-label="Launcher" className="flex w-11 items-center justify-center">
        <svg viewBox="0 0 28 28" className="size-7" fill="#fff"><circle cx="6" cy="6.500" r="6" /><circle cx="22" cy="6.500" r="6" /><circle cx="6" cy="21.500" r="6" /><circle cx="22" cy="21.500" r="6" /></svg>
      </button>
      {apps.map((a) => (
        <button key={a.name} aria-label={a.name} className="flex w-15 flex-col items-center justify-between px-[2px] pt-[11px] pb-[3px]">
          {a.art ? <svg viewBox="0 0 22 22" className="size-[22px] overflow-visible">{a.art}</svg> : <AppLogo className="size-[22px]" />}
          <span className={"h-1 w-full rounded-full " + a.bar} />
        </button>
      ))}
      <div className="ml-auto flex items-center gap-2 pr-1">
        <svg viewBox="0 0 26 20" className="mr-[6px] h-5 w-[26px]"><rect x="1" y="1" width="24" height="18" rx="2.500" fill="none" stroke="#fff" strokeWidth="2" /><path d="M4 15h18" stroke="#fff" strokeWidth="2" /></svg>
        <span className="mr-[2px] -mt-5 h-4 w-[30px] bg-white"><span className="block h-4 rounded-md bg-[#aad7f0]" /></span>
        <svg viewBox="0 0 22 22" className={tray + " ml-px"} fill="none" stroke="url(#rose)" strokeWidth="1.400"><path d="M11 0l9 3v8c0 5-4 8-9 11-5-3-9-6-9-11V3z" /><circle cx="11" cy="10.500" r="6" /><path d="M8 10.500l2 2.500 4-4" strokeWidth="2" /></svg>
        <svg viewBox="0 0 22 22" className={tray}><path d="M3 3h3v9H3zM7 3h4v3H9v6H7zM12 3h2v7h-2z" fill="#3daee9" /><path d="M16 6h4v11h-3v3l-3-3H9v-4h7z" fill="#fff" /></svg>
        <svg viewBox="0 0 22 22" className={tray}>{bag}</svg>
        <svg viewBox="0 0 22 22" className={tray}><rect x="5" y="4" width="12" height="14" rx="1" fill="none" stroke="#fff" strokeWidth="2" /><path d="M8 2h6v5H8z" fill="#fff" /></svg>
        <svg viewBox="0 0 22 22" className={tray} fill="none" stroke="#fff" strokeWidth="2"><circle cx="11" cy="11" r="8" /><path d="M9 8v6M13 8v6" /></svg>
        <svg viewBox="0 0 22 22" className={tray}><path d="M2 8h3l5-4v14l-5-4H2z" fill="#fff" /><path d="M12 7c2 2 2 6 0 8M14.500 5.500c3 3 3 8 0 11" fill="none" stroke="#fff" strokeWidth="1.700" /><path d="M17 4c4 4 4 10 0 14" fill="none" stroke="#888" strokeWidth="1.700" /></svg>
        <svg viewBox="0 0 22 22" className={tray}><rect x="4" y="1" width="14" height="20" rx="7" fill="#fff" /><path d="M7.500 7.500l7 7-3.500 3.500V4l3.500 3.500-7 7" fill="none" stroke="#333" strokeWidth="1.300" /></svg>
        <span className="w-[22px] text-center text-[19px] leading-6">us</span>
        <svg viewBox="0 0 22 22" className={tray}><path d="M0 7c6-5 16-5 22 0L11 19z" fill="#888" /><path d="M3 9c5-4 11-4 16 0l-8 10z" fill="#fff" /></svg>
        <svg viewBox="0 0 22 22" className="-mx-px size-[22px]"><path d="M5 14l6-6 6 6z" fill="#fff" /></svg>
        <div className="flex w-[86px] flex-col items-center pt-px">
          <span className="text-[19px] leading-[23px]">15:02</span>
          <span className="text-base leading-[17px]">27.04.2023</span>
        </div>
      </div>
    </footer>
  );
}

/* ---------- window ---------- */

const menus = ["File", "Edit", "Component", "Windows", "Options", "Analysis", "Design", "Model", "Help"];

export default function App() {
  const bevel = "flex h-[14px] w-[15px] items-center justify-center border border-t-white border-r-[#666] border-b-[#666] border-l-white bg-[#f0f0f0]";
  const small = "flex size-3 items-center justify-center border border-[#b0b0b0]";
  return (
    <div className="flex h-screen flex-col overflow-hidden bg-[#f4f4f4] text-black">
      <header className="flex h-[29px] shrink-0 items-center bg-linear-to-b from-[#40454d] to-[#2f3437] px-2 text-white">
        <AppLogo className="size-5" />
        <svg viewBox="0 0 12 12" className="ml-2 size-3" fill="#fff"><path d="M7 0l5 5-1 1-1-.5L8 8v2l-1 1-2.500-2.500L0 12l3.500-4.500L1 5l1-1h2l2.500-2L6 1z" /></svg>
        <h1 className="flex-1 pl-[26px] text-center font-['Noto_Sans',sans-serif] text-[13px] leading-5 text-[#f0f0f0]">Micro-Cap 12.2.0.5 (64 bit) - [Z:\home\alex\MIPT\electronics\19-active-filters\CIR\skey.CIR]</h1>
        <div className="flex items-center gap-[14px]">
          <button aria-label="Minimize"><svg viewBox="0 0 12 12" className="size-3"><path d="M1 3l5 5 5-5" fill="none" stroke="#fff" strokeWidth="1.200" /></svg></button>
          <button aria-label="Maximize"><svg viewBox="0 0 12 12" className="size-3"><path d="M6 1l5 5-5 5-5-5z" fill="none" stroke="#fff" strokeWidth="1.200" /></svg></button>
          <button aria-label="Close" className="-ml-1"><svg viewBox="0 0 18 18" className="size-[18px]"><circle cx="9" cy="9" r="9" fill="#fff" /><path d="M5 5l8 8M13 5l-8 8" stroke="#333" strokeWidth="1.300" /></svg></button>
        </div>
      </header>

      <nav className={ui + " flex h-5 shrink-0 items-center border-b border-[#aaa] bg-white text-[11px]"}>
        <DocLogo />
        <ul className="ml-[6px] flex gap-[14px] pt-1">
          {menus.map((m) => (
            <li key={m} className="flex"><button className="leading-4"><span className="underline underline-offset-2">{m[0]}</span>{m.slice(1)}</button></li>
          ))}
        </ul>
        <div className="ml-auto flex gap-[3px] pr-[2px]">
          <button aria-label="Minimize document" className={small}><svg viewBox="0 0 8 8" className="size-2"><path d="M1 6.500h5" stroke="#aaa" strokeWidth="1.500" /></svg></button>
          <button aria-label="Restore document" className={small}><svg viewBox="0 0 8 8" className="size-2"><path d="M2.500 1.500h5v4M.5 3.500h5v4h-5z" fill="none" stroke="#aaa" /></svg></button>
          <button aria-label="Close document" className={small}><svg viewBox="0 0 8 8" className="size-2"><path d="M1 1l6 6M7 1L1 7" stroke="#aaa" /></svg></button>
        </div>
      </nav>

      <div className="flex h-[32px] shrink-0 border-b-2 border-[#aaa] bg-white">
        {mainGroups.map((g, i) => (
          <div key={i} className={"flex h-[30px] items-center border-r border-[#999] pl-1 " + (g.wide ? "pr-7" : "pr-[2px]")}>
            <span className="mr-1 h-6 w-0 border-r-3 border-dotted border-[#333]" />
            <Tools items={g.items} />
          </div>
        ))}
      </div>

      <div className="flex min-h-0 flex-1 border-b border-[#aaa] pb-1">
        <Browser />
        <main className="ml-px flex min-w-0 flex-1 flex-col pr-px">
          <div className="flex min-h-0 flex-1 flex-col rounded-br border-r-2 border-b border-[#aaa] bg-white pt-[2px] pr-[2px] pl-[2px]">
            <section className="flex min-h-0 flex-1 flex-col border-t border-l border-[#ddd] bg-[#f4f4f4] pt-[3px] pl-[3px]">
              <div className="flex h-[18px] shrink-0 items-center bg-[#3295ff] pl-[2px]">
                <DocLogo />
                <h2 className="ml-[2px] flex-1 pt-[2px] font-['DejaVu_Sans',sans-serif] text-[12px] leading-4">Z:\home\alex\MIPT\electronics\19-active-filters\CIR\skey.CIR</h2>
                <button aria-label="Minimize schematic" className={bevel}><svg viewBox="0 0 9 9" className="size-[9px]"><path d="M1 8h5" stroke="#000" strokeWidth="1.500" /></svg></button>
                <button aria-label="Restore schematic" className={bevel}><svg viewBox="0 0 9 9" className="size-[9px]" fill="none" stroke="#000"><path d="M2.500 2v-.5h6v5H7M.5 4h6v4.500h-6z" /><path d="M0 4h7M2 1.500h7" strokeWidth="1.500" /></svg></button>
                <button aria-label="Close schematic" className={bevel + " ml-[3px]"}><svg viewBox="0 0 9 9" className="size-[9px]"><path d="M1 1l7 7M8 1L1 8" stroke="#000" strokeWidth="2" /></svg></button>
              </div>
              <div className="flex h-[30px] shrink-0 items-center overflow-hidden pl-[3px]">
                <Tools items={docTools} />
              </div>
              <div className="flex min-h-0 flex-1 border-t-2 border-l-2 border-[#888] bg-white pb-[2px]">
                <Schematic />
                <div className="flex w-[14px] shrink-0 flex-col bg-[#f8f8f8] pt-[3px]">
                  <button aria-label="Scroll drawing up" className={scrollPiece + " h-[18px] border-r-0"}><Arrow turn="" /></button>
                  <span className={scrollPiece + " h-[256px] border-r-0"} />
                  <button aria-label="Scroll drawing down" className={scrollPiece + " mt-auto h-[11px] border-r-0 border-b-0"}><Arrow turn="rotate-180" /></button>
                </div>
              </div>
            </section>
          </div>
          <div className={ui + " flex h-[24px] shrink-0 items-start pl-[3px] text-[11px]"}>
            <button className="h-[18px] w-[87px] rounded-b-xs border-r-2 border-b-2 border-[#888] pt-2 leading-2">pass2T.CIR</button>
            <button className="ml-1 h-[18px] w-[84px] border-b-2 border-[#888] pt-2 leading-2">stop2T.CIR</button>
            <button className="h-[21px] w-[82px] rounded-b-xs border-r-2 border-b-2 border-[#888] pt-[2px] leading-3">skey.CIR</button>
          </div>
        </main>
      </div>

      <div className="flex h-[71px] shrink-0 gap-[3px] border-b border-[#aaa] pt-[3px] pb-[3px]">
        <div className="flex w-3 flex-col items-end">
          <button aria-label="Close output" className="-mr-px mt-px flex size-3 items-center justify-center"><svg viewBox="0 0 7 7" className="size-[7px]"><path d="M1 1l5 5M6 1L1 6" stroke="#000" strokeWidth="1.600" /></svg></button>
          <span className="mt-[2px] mr-[2px] w-[5px] flex-1 border-x border-b border-[#aaa]" />
        </div>
        <div className="mr-[3px] flex-1 bg-white" />
      </div>

      <div className="mt-px flex h-[22px] shrink-0 border-t border-[#aaa] font-['Liberation_Sans',sans-serif] text-[15px] leading-5">
        <span className="my-px w-[175px] border-r border-[#999] pl-[3px]">Select Mode</span>
        <span className="flex-1 pl-1">Drawing area</span>
        <span className="my-px w-[89px] border-x border-[#999] pl-[6px]">Grid 143,46</span>
        <span className="w-[104px]" />
      </div>

      <Taskbar />
    </div>
  );
}
